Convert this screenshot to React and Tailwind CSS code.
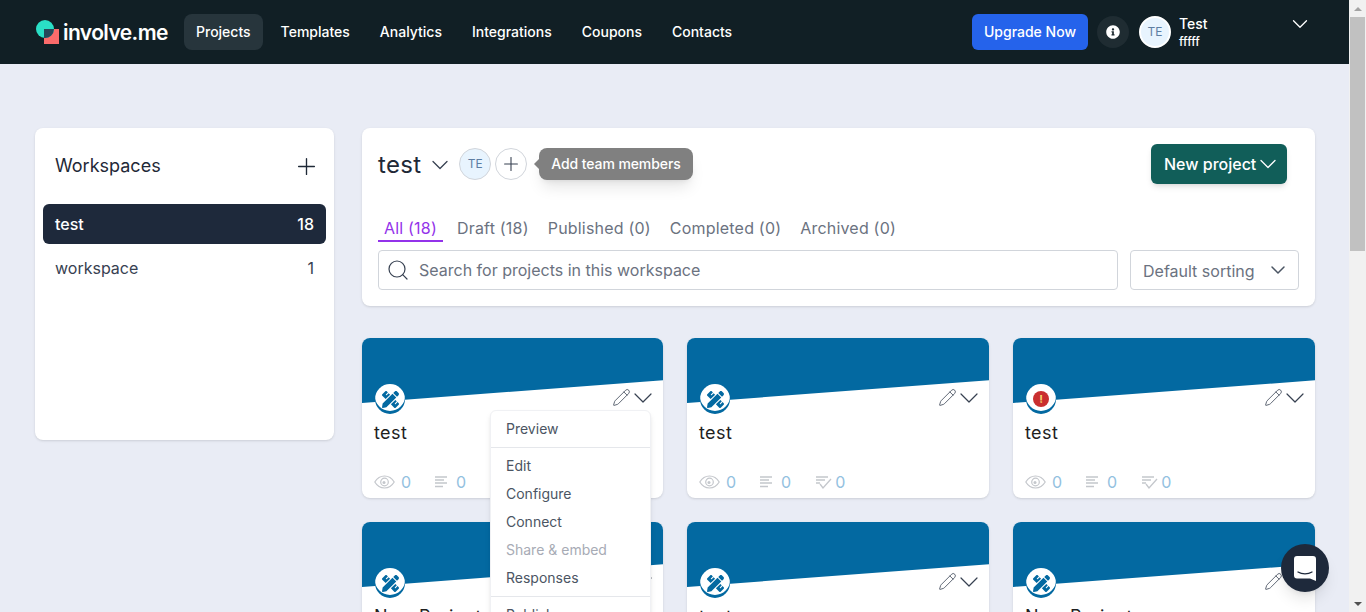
import { ChevronDown, Pencil, Plus, Search } from 'lucide-react'
import { FaPencilRuler, FaInfoCircle } from 'react-icons/fa'

const NAV_ITEMS = [
  { label: 'Projects', active: true },
  { label: 'Templates' },
  { label: 'Analytics' },
  { label: 'Integrations' },
  { label: 'Coupons' },
  { label: 'Contacts' },
]

const TABS = ['Draft (18)', 'Published (0)', 'Completed (0)', 'Archived (0)']

const PROJECTS = [
  { title: 'test', menu: true },
  { title: 'test' },
  { title: 'test', alert: true },
  { title: 'New Project' },
  { title: 'test' },
  { title: 'New Project' },
]

function Logo() {
  return (
    <div className="flex items-center w-[133px]">
      <svg width="25" height="25" viewBox="0 0 25 25" className="mr-[3px]">
        <rect x="9" y="9" width="15" height="15" fill="#fb6b6b" />
        <circle cx="10" cy="9" r="9" fill="#2adfc6" />
        <path d="M9 9h10a9 9 0 0 1-10 9z" fill="#27485a" />
      </svg>
      <span className="text-[21px] font-semibold tracking-[-0.6px] text-white leading-none">involve.me</span>
    </div>
  )
}

function Navbar() {
  return (
    <header className="h-16 shrink-0 bg-[#111f25] flex items-center pl-[35px] pr-[36px]">
      <Logo />
      <nav className="flex items-center ml-[16px] gap-[6px] text-sm font-medium text-white">
        {NAV_ITEMS.map((item) => (
          <a
            key={item.label}
            className={`h-9 flex items-center rounded-lg px-3 ${item.active ? 'bg-[#27353c]' : ''}`}
          >
            {item.label}
          </a>
        ))}
      </nav>
      <div className="ml-auto flex items-center">
        <button className="h-9 px-3 rounded-md bg-[#2563eb] text-sm font-medium text-white">Upgrade Now</button>
        <div className="ml-[9px] w-8 h-8 rounded-full bg-[#1f2c32] flex items-center justify-center text-white">
          <FaInfoCircle size={14} />
        </div>
        <div className="ml-[10px] w-8 h-8 rounded-full bg-[#e8f4fe] border-2 border-white flex items-center justify-center text-xs text-[#5d7ea3]">
          TE
        </div>
        <div className="ml-[8px] w-[108px] text-white font-medium leading-none">
          <div className="text-sm">Test</div>
          <div className="text-xs">fffff</div>
        </div>
        <ChevronDown className="text-white -mt-[17px]" size={26} strokeWidth={1.2} />
      </div>
    </header>
  )
}

function Sidebar() {
  return (
    <aside className="w-[299px] h-[312px] shrink-0 bg-white rounded-lg shadow-sm px-2 pt-[22px]">
      <div className="flex items-center justify-between pl-3 pr-[6px] h-[32px]">
        <h2 className="text-lg text-[#1f2937]">Workspaces</h2>
        <Plus size={27} strokeWidth={1.2} className="text-[#1f2937]" />
      </div>
      <div className="mt-[22px] h-10 rounded-md bg-[#1e293b] flex items-center justify-between px-3 text-white text-base font-medium">
        <span>test</span>
        <span>18</span>
      </div>
      <div className="mt-1 h-10 flex items-center justify-between px-3 text-base text-[#374151]">
        <span>workspace</span>
        <span>1</span>
      </div>
    </aside>
  )
}

function ProjectHeader() {
  return (
    <section className="h-[178px] bg-white rounded-lg shadow-sm px-4 pt-4 flex flex-col">
      <div className="flex items-center h-10">
        <span className="text-2xl tracking-[0.3px] text-[#1f2937] mt-[1px]">test</span>
        <ChevronDown size={28} strokeWidth={1.1} className="ml-[5px] mt-[2px] text-[#374151]" />
        <div className="ml-[5px] w-8 h-8 rounded-full bg-[#e8f4fe] border border-[#d1d5db] flex items-center justify-center text-xs text-[#5d7ea3]">
          TE
        </div>
        <div className="ml-[4px] w-8 h-8 rounded-full bg-white border border-[#d1d5db] flex items-center justify-center text-[#374151]">
          <Plus size={22} strokeWidth={1.2} />
        </div>
        <div className="relative ml-[12px] h-8 px-[12px] rounded-lg bg-[#808080] shadow-lg flex items-center text-sm font-medium tracking-[-0.1px] text-white">
          <span className="absolute -left-[5px] top-[11px] w-0 h-0 border-y-[5px] border-y-transparent border-r-[5px] border-r-[#808080]" />
          Add team members
        </div>
        <button className="ml-auto mr-[12px] w-[136px] h-10 rounded-md bg-[#115e59] shadow-md flex items-center pl-[13px] gap-0 text-base font-medium text-white">
          New project
          <ChevronDown size={28} strokeWidth={1.1} className="-ml-[2px]" />
        </button>
      </div>
      <div className="mt-[32px] flex items-start gap-[13px] h-[26px] text-base tracking-[0.2px] text-[#6b7280]">
        <span className="h-[26px] px-[6px] border-b-2 border-[#9333ea] text-[#9333ea]">All (18)</span>
        {TABS.map((tab) => (
          <span key={tab} className="px-[1px] mr-[4px]">{tab}</span>
        ))}
      </div>
      <div className="mt-[8px] flex gap-3">
        <div className="flex-1 h-10 rounded border border-[#d1d5db] flex items-center pl-[7px] pr-2 text-base text-[#6b7280]">
          <Search size={24} strokeWidth={1.2} className="text-[#374151]" />
          <span className="ml-[9px]">Search for projects in this workspace</span>
        </div>
        <div className="w-[169px] h-10 rounded border border-[#d1d5db] flex items-center justify-between pl-3 pr-[8px] text-base text-[#6b7280]">
          <span className="mt-[1px]">Default sorting</span>
          <ChevronDown size={24} strokeWidth={1.5} className="text-[#4b5563] -mt-[1px]" />
        </div>
      </div>
    </section>
  )
}

function EyeIcon() {
  return (
    <svg width="21" height="14" viewBox="0 0 21 14" fill="none" stroke="#c4c7cc" strokeWidth="1.2">
      <path d="M.8 7C3.2 3 6.5 1 10.500 1s7.300 2 9.700 6c-2.400 4-5.700 6-9.700 6S3.200 11 .8 7z" />
      <circle cx="10.500" cy="7" r="3.800" />
      <circle cx="10" cy="7.500" r="1.500" fill="#c4c7cc" stroke="none" />
    </svg>
  )
}

function LinesIcon() {
  return (
    <svg width="13" height="12" viewBox="0 0 13 12" stroke="#c4c7cc" strokeWidth="1.3">
      <path d="M0 1h12M0 4h9M0 7h12M0 10.500h8" />
    </svg>
  )
}

function CheckLinesIcon() {
  return (
    <svg width="16" height="13" viewBox="0 0 16 13" fill="none" stroke="#c4c7cc" strokeWidth="1.3">
      <path d="M0 1h12M0 4h9M0 7h4M4 8l3 4 8-9" />
    </svg>
  )
}

function ProjectMenu() {
  return (
    <div className="absolute z-10 left-[128px] top-[72px] w-[161px] bg-white rounded-md shadow-md border border-[#f0f1f4] text-sm text-[#4b5563]">
      <div className="h-[36px] flex items-center px-[15px]">Preview</div>
      <div className="border-t border-[#e5e7eb] pt-[4px] pb-[4px]">
        <div className="h-7 flex items-center px-[15px]">Edit</div>
        <div className="h-7 flex items-center px-[15px]">Configure</div>
        <div className="h-7 flex items-center px-[15px]">Connect</div>
        <div className="h-7 flex items-center px-[15px] text-[#a7abb5]">Share &amp; embed</div>
        <div className="h-7 flex items-center px-[15px]">Responses</div>
      </div>
      <div className="border-t border-[#e5e7eb] pt-[4px]">
        <div className="h-7 flex items-center px-[15px]">Publish</div>
      </div>
    </div>
  )
}

function ProjectCard({ project }) {
  return (
    <div className="relative h-[160px] bg-white rounded-lg shadow-sm">
      <div className="h-[65px] rounded-t-lg bg-[#0369a1] [clip-path:polygon(0_0,100%_0,100%_65%,0_100%)]" />
      <div className="absolute left-[13px] top-[46px] w-[30px] h-[30px] rounded-full bg-white shadow-[inset_0_-3px_0_#0369a1] flex items-center justify-center text-[#0369a1]">
        {project.alert ? (
          <span className="w-4 h-4 rounded-full bg-[#c92f2f] flex items-center justify-center text-[11px] font-bold leading-none text-[#f5d76e]">!</span>
        ) : (
          <FaPencilRuler size={17} />
        )}
      </div>
      <div className="absolute right-[4px] top-[44px] flex items-center text-[#374151]">
        <Pencil size={19} strokeWidth={1} className="-mr-[4px] -mt-[1px]" />
        <ChevronDown size={32} strokeWidth={0.9} />
      </div>
      <div className="absolute left-[12px] top-[81px] text-lg tracking-[0.4px] text-[#1f1f1f]">{project.title}</div>
      <div className="absolute left-[12px] top-[134px] h-5 flex items-center text-base text-[#93c1df]">
        <EyeIcon />
        <span className="ml-[6px]">0</span>
        <span className="ml-[24px]"><LinesIcon /></span>
        <span className="ml-[8px]">0</span>
        <span className="ml-[25px]"><CheckLinesIcon /></span>
        <span className="ml-[3px]">0</span>
      </div>
      {project.menu && <ProjectMenu />}
    </div>
  )
}

function Scrollbar() {
  return (
    <div className="w-[17px] shrink-0 bg-[#f1f1f1] flex flex-col items-center">
      <div className="h-[17px] flex items-center justify-center">
        <span className="w-0 h-0 border-x-[4px] border-x-transparent border-b-[4px] border-b-[#a3a3a3]" />
      </div>
      <div className="w-[15px] h-[234px] bg-[#c1c1c1]" />
      <div className="mt-auto h-[17px] flex items-center justify-center">
        <span className="w-0 h-0 border-x-[4px] border-x-transparent border-t-[4px] border-t-[#505050]" />
      </div>
    </div>
  )
}

export default function App() {
  return (
    <div className="relative flex h-[612px] overflow-hidden bg-[#e9ecf5] font-['Inter',sans-serif]">
      <div className="flex-1 min-w-0 flex flex-col">
        <Navbar />
        <main className="pt-16 pl-[35px] pr-[34px] flex gap-[28px] items-start">
          <Sidebar />
          <div className="flex-1 min-w-0">
            <ProjectHeader />
            <div className="mt-8 grid grid-cols-[301px_302px_302px] gap-x-6 gap-y-6">
              {PROJECTS.map((project, i) => (
                <ProjectCard key={i} project={project} />
              ))}
            </div>
          </div>
        </main>
      </div>
      <Scrollbar />
      {/* Chat launcher */}
      <div className="absolute z-20 left-[1281px] top-[544px] w-12 h-12 rounded-full bg-[#1e293b] shadow-lg flex items-center justify-center">
        <svg width="22" height="25" viewBox="0 0 22 25">
          <path d="M3 0h16a3 3 0 0 1 3 3v22l-6-2.500H3a3 3 0 0 1-3-3V3a3 3 0 0 1 3-3z" fill="#fff" />
          <path d="M4 16c4 2.500 10 2.500 14 0" fill="none" stroke="#1e293b" strokeWidth="1.300" strokeLinecap="round" />
        </svg>
      </div>
    </div>
  )
}
